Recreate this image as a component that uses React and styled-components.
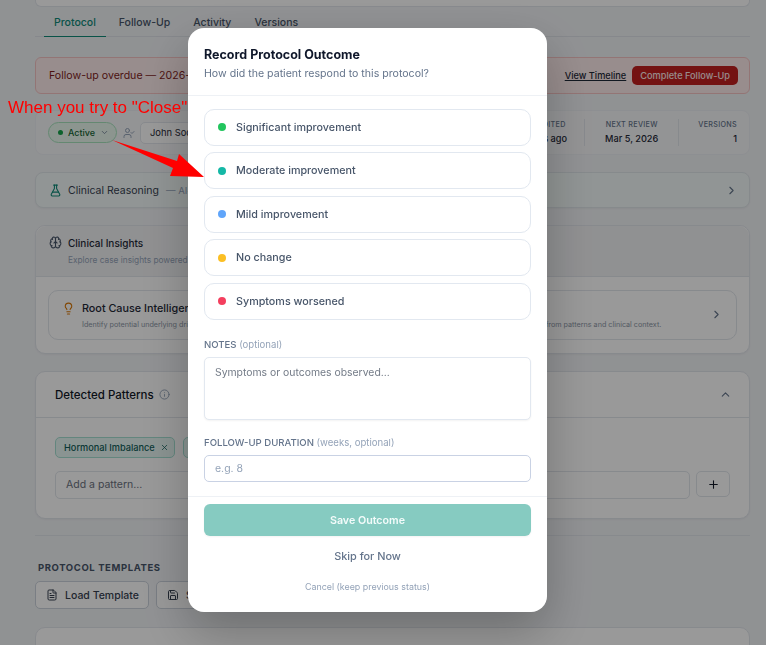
import React from 'react';
import styled, { createGlobalStyle } from 'styled-components';
import {
  Brain, ChevronDown, ChevronRight, ChevronUp, FileText, FlaskConical,
  Info, Lightbulb, Plus, Save, UserCheck, X,
} from 'lucide-react';

const GlobalStyle = createGlobalStyle`
  html, body { margin: 0; padding: 0; }
  body {
    background: #f1f3f6;
    font-family: Inter, "Liberation Sans", sans-serif;
    overflow: hidden;
  }
  * { box-sizing: border-box; }
`;

const Page = styled.div`
  position: relative;
  width: 766px;
  height: 645px;
  overflow: hidden;
  padding: 0 16px 0 35px;
`;

const TopCard = styled.div`
  height: 7px;
  background: #fff;
  border: 1px solid #e2e6ec;
  border-top: 0;
  border-radius: 0 0 6px 6px;
`;

const Tabs = styled.div`
  display: flex;
  height: 30px;
  border-bottom: 1px solid #dfe3e9;
  margin-bottom: 20px;
  padding-left: 9px;
`;

const Tab = styled.div`
  height: 30px;
  padding: 9px 10px 0;
  margin-right: 3px;
  font-size: 10.5px;
  font-weight: 500;
  color: ${(p) => (p.$active ? '#0f8a78' : '#475569')};
  border-bottom: ${(p) => (p.$active ? '1px solid #0f8a78' : '0')};
`;

const Alert = styled.div`
  display: flex;
  align-items: center;
  justify-content: space-between;
  height: 37px;
  padding: 0 11px 0 13px;
  background: #fdecec;
  border: 1px solid #f6c4c4;
  border-radius: 6px;
  margin-bottom: 16px;
  font-size: 10.6px;
  color: #7f1d1d;
`;

const AlertActions = styled.div`
  display: flex;
  align-items: center;
  gap: 6px;
`;

const TimelineLink = styled.span`
  font-size: 9.2px;
  font-weight: 500;
  color: #1f2937;
  text-decoration: underline;
`;

const DangerButton = styled.div`
  height: 19px;
  padding: 0 8px;
  border-radius: 5px;
  background: #c11f1f;
  color: #fde8e8;
  font-size: 9.2px;
  font-weight: 500;
  line-height: 19px;
`;

const MetaCard = styled.div`
  display: flex;
  align-items: center;
  justify-content: space-between;
  height: 45px;
  padding: 0 12px;
  background: #f6f7f9;
  border: 1px solid #eceff3;
  border-radius: 8px;
  margin-bottom: 17px;
`;

const MetaLeft = styled.div`
  display: flex;
  align-items: center;
  gap: 5px;
`;

const StatusPill = styled.div`
  display: flex;
  align-items: center;
  width: 69px;
  height: 21px;
  padding-left: 9px;
  border: 1px solid #a7e3bd;
  border-radius: 11px;
  background: #e9f8ef;
  color: #166534;
  font-size: 9px;
  font-weight: 500;
  margin-right: 1px;
`;

const StatusDot = styled.span`
  width: 5px;
  height: 5px;
  border-radius: 50%;
  background: #16a34a;
  margin-right: 5px;
`;

const Assignee = styled.div`
  height: 22px;
  width: 120px;
  padding-left: 9px;
  background: #fff;
  border: 1px solid #e2e6ec;
  border-radius: 5px;
  font-size: 9.4px;
  line-height: 20px;
  color: #1f2937;
`;

const Stats = styled.div`
  display: flex;
  align-items: center;
`;

const Stat = styled.div`
  text-align: ${(p) => p.$align || 'center'};
  padding: 0 ${(p) => p.$right ?? 20}px 0 ${(p) => p.$left ?? 20}px;
  border-left: ${(p) => (p.$first ? '0' : '1px solid #e2e6ec')};
`;

const StatLabel = styled.div`
  font-size: 7.2px;
  font-weight: 500;
  letter-spacing: 0.3px;
  color: #64748b;
  line-height: 11px;
`;

const StatValue = styled.div`
  font-size: 9.2px;
  font-weight: 500;
  color: #1f2937;
  line-height: 14px;
  margin-top: 2px;
`;

const ReasoningCard = styled.div`
  display: flex;
  align-items: center;
  height: 36px;
  padding: 0 11px 0 13px;
  background: #f2f9f8;
  border: 1px solid #dfe6ea;
  border-radius: 8px;
  margin-bottom: 17px;
  font-size: 10.5px;
  color: #374151;
  box-shadow: 0 1px 2px rgba(0, 0, 0, 0.04);
`;

const MutedInline = styled.span`
  margin-left: 7px;
  color: #94a3b8;
  font-size: 9.5px;
`;

const RowEnd = styled.div`
  margin-left: auto;
  display: flex;
  color: #64748b;
`;

const Panel = styled.div`
  background: #fff;
  border: 1px solid #e2e6ec;
  border-radius: 10px;
  margin-bottom: ${(p) => p.$gap || 17}px;
  box-shadow: 0 1px 2px rgba(0, 0, 0, 0.04);
`;

const InsightsHead = styled.div`
  display: flex;
  gap: 6px;
  height: 51px;
  padding: 10px 13px 0;
  background: #f1f2f4;
  border-bottom: 1px solid #e2e6ec;
  border-radius: 10px 10px 0 0;
`;

const HeadTitle = styled.div`
  font-size: 10px;
  font-weight: 500;
  color: #1f2937;
  line-height: 14px;
`;

const HeadSub = styled.div`
  font-size: 8.3px;
  color: #94a3b8;
  margin-top: 5px;
`;

const InsightsBody = styled.div`
  padding: 13px 12px;
`;

const RootCard = styled.div`
  display: flex;
  gap: 7px;
  height: 50px;
  padding: 11px 13px 0 13px;
  border: 1px solid #e2e6ec;
  border-radius: 10px;
`;

const RootTitle = styled.div`
  font-size: 10.8px;
  font-weight: 500;
  color: #1f2937;
  line-height: 14px;
`;

const RootSub = styled.div`
  font-size: 7.2px;
  color: #8b95a5;
  margin-top: 4px;
  white-space: nowrap;
`;

const PatternsHead = styled.div`
  display: flex;
  align-items: center;
  height: 46px;
  padding: 0 17px 0 19px;
  border-bottom: 1px solid #e2e6ec;
  font-size: 11.5px;
  font-weight: 500;
  color: #111827;
`;

const PatternsBody = styled.div`
  padding: 19px;
`;

const TagRow = styled.div`
  display: flex;
  gap: 8px;
  margin-bottom: 13px;
`;

const Tag = styled.div`
  display: flex;
  align-items: center;
  gap: 5px;
  height: 21px;
  padding: 0 5px 0 8px;
  background: #e7f7f3;
  border: 1px solid #a5e0d3;
  border-radius: 5px;
  font-size: 9.2px;
  font-weight: 500;
  color: #115e59;
`;

const AddRow = styled.div`
  display: flex;
  gap: 6px;
`;

const AddInput = styled.div`
  flex: 1;
  height: 28px;
  padding-left: 10px;
  border: 1px solid #e2e6ec;
  border-radius: 5px;
  font-size: 10.5px;
  line-height: 26px;
  color: #6b7280;
`;

const AddButton = styled.div`
  display: flex;
  align-items: center;
  justify-content: center;
  width: 34px;
  height: 26px;
  border: 1px solid #e2e6ec;
  border-radius: 5px;
  color: #111827;
`;

const Divider = styled.div`
  height: 1px;
  background: #e2e6ec;
  margin-bottom: 26px;
`;

const SectionLabel = styled.div`
  padding-left: 3px;
  font-size: 9.5px;
  font-weight: 700;
  letter-spacing: 0.6px;
  line-height: 12px;
  color: #475569;
  margin-bottom: 7px;
`;

const TemplateRow = styled.div`
  display: flex;
  gap: 7px;
  margin-bottom: 18px;
`;

const TemplateButton = styled.div`
  display: flex;
  align-items: center;
  gap: 7px;
  width: ${(p) => p.$w}px;
  height: 28px;
  padding-left: 10px;
  background: #fff;
  border: 1px solid #cbd2dc;
  border-radius: 5px;
  font-size: 10.5px;
  font-weight: 500;
  color: #374151;
`;

const NextCard = styled.div`
  height: 60px;
  border: 1px solid #e2e6ec;
  border-radius: 10px;
  background: #fff;
`;

const Backdrop = styled.div`
  position: absolute;
  inset: 0;
  padding: 28px 0 0 188px;
  background: rgba(0, 0, 0, 0.4);
  backdrop-filter: blur(0.6px);
`;

const Modal = styled.div`
  display: flex;
  flex-direction: column;
  width: 359px;
  height: 584px;
  background: #fff;
  border-radius: 16px;
  box-shadow: 0 20px 50px rgba(0, 0, 0, 0.25);
`;

const ModalHead = styled.div`
  height: 68px;
  padding: 19px 16px 0;
  border-bottom: 1px solid #eef1f5;
`;

const ModalTitle = styled.div`
  font-size: 12.5px;
  font-weight: 700;
  line-height: 15px;
  color: #0f172a;
`;

const ModalSub = styled.div`
  margin-top: 5px;
  font-size: 10.6px;
  line-height: 13px;
  color: #64748b;
`;

const ModalBody = styled.div`
  flex: 1;
  padding: 13px 16px 0;
`;

const OptionList = styled.div`
  display: flex;
  flex-direction: column;
  gap: 6.7px;
  margin-bottom: 18.8px;
`;

const Option = styled.div`
  display: flex;
  align-items: center;
  gap: 10px;
  height: 36.8px;
  padding-left: 13px;
  border: 1px solid #e2e8f0;
  border-radius: 10px;
  font-size: 10.75px;
  font-weight: 500;
  color: #475569;
`;

const Dot = styled.span`
  width: 8px;
  height: 8px;
  border-radius: 50%;
  background: ${(p) => p.$color};
`;

const FieldLabel = styled.div`
  font-size: 9.6px;
  font-weight: 500;
  line-height: 12px;
  color: #64748b;
  margin-bottom: 6px;
`;

const Optional = styled.span`
  font-weight: 400;
  color: #94a3b8;
`;

const NotesBox = styled.textarea`
  display: block;
  width: 100%;
  height: 63.5px;
  padding: 7px 10px;
  margin-bottom: 16.5px;
  border: 1px solid #e2e8f0;
  border-radius: 5px;
  outline: 0;
  resize: none;
  font-family: inherit;
  font-size: 10.4px;
  line-height: 15px;
  box-shadow: 0 1px 2px rgba(0, 0, 0, 0.05);
  &::placeholder { color: #737b87; }
`;

const WeeksInput = styled.input`
  display: block;
  width: 100%;
  height: 27.5px;
  padding: 0 10px;
  border: 1px solid #c9d2e4;
  border-radius: 5px;
  outline: 0;
  font-family: inherit;
  font-size: 10.5px;
  &::placeholder { color: #94a3b8; }
`;

const ModalFoot = styled.div`
  height: 116px;
  padding: 7px 16px 0;
  border-top: 1px solid #eef1f5;
  text-align: center;
`;

const SaveButton = styled.div`
  height: 32px;
  border-radius: 6px;
  background: #86cbc1;
  color: #f3fbfa;
  font-size: 10.7px;
  font-weight: 600;
  line-height: 33px;
  box-shadow: 0 1px 2px rgba(0, 0, 0, 0.05);
`;

const SkipLink = styled.div`
  margin-top: 13px;
  font-size: 10.9px;
  font-weight: 500;
  line-height: 14px;
  color: #64748b;
`;

const CancelLink = styled.div`
  margin-top: 18px;
  font-size: 8.9px;
  line-height: 12px;
  color: #94a3b8;
`;

const Annotation = styled.div`
  position: absolute;
  left: 8px;
  top: 98px;
  font-family: "Liberation Sans", Arial, sans-serif;
  font-size: 17px;
  line-height: 20px;
  color: #ff0000;
  white-space: nowrap;
`;

const ArrowMark = styled.svg`
  position: absolute;
  left: 105px;
  top: 135px;
`;

const outcomes = [
  ['#22c55e', 'Significant improvement'],
  ['#14b8a6', 'Moderate improvement'],
  ['#60a5fa', 'Mild improvement'],
  ['#fbbf24', 'No change'],
  ['#f43f5e', 'Symptoms worsened'],
];

export default function App() {
  return (
    <Page>
      <GlobalStyle />
      <TopCard />
      <Tabs>
        <Tab $active>Protocol</Tab>
        <Tab>Follow-Up</Tab>
        <Tab>Activity</Tab>
        <Tab>Versions</Tab>
      </Tabs>

      <Alert>
        <span>Follow-up overdue — 2026-02-05</span>
        <AlertActions>
          <TimelineLink>View Timeline</TimelineLink>
          <DangerButton>Complete Follow-Up</DangerButton>
        </AlertActions>
      </Alert>

      <MetaCard>
        <MetaLeft>
          <StatusPill>
            <StatusDot />
            Active
            <ChevronDown size={9} color="#64748b" style={{ marginLeft: 5 }} />
          </StatusPill>
          <UserCheck size={12} color="#94a3b8" />
          <Assignee>John Socrates</Assignee>
        </MetaLeft>
        <Stats>
          <Stat $first $right={17}>
            <StatLabel>LAST EDITED</StatLabel>
            <StatValue>2 hours ago</StatValue>
          </Stat>
          <Stat>
            <StatLabel>NEXT REVIEW</StatLabel>
            <StatValue>Mar 5, 2026</StatValue>
          </Stat>
          <Stat $align="right" $right={0} $left={19}>
            <StatLabel>VERSIONS</StatLabel>
            <StatValue>1</StatValue>
          </Stat>
        </Stats>
      </MetaCard>

      <ReasoningCard>
        <FlaskConical size={13} color="#0f8a78" style={{ marginRight: 6 }} />
        Clinical Reasoning
        <MutedInline>— AI-assisted summary</MutedInline>
        <RowEnd><ChevronRight size={13} /></RowEnd>
      </ReasoningCard>

      <Panel>
        <InsightsHead>
          <Brain size={13} color="#475569" />
          <div>
            <HeadTitle>Clinical Insights</HeadTitle>
            <HeadSub>Explore case insights powered by AI</HeadSub>
          </div>
        </InsightsHead>
        <InsightsBody>
          <RootCard>
            <Lightbulb size={13} color="#d97706" />
            <div>
              <RootTitle>Root Cause Intelligence</RootTitle>
              <RootSub>
                Identify potential underlying drivers of the presenting symptoms and connect them with supporting evidence and further findings drawn from patterns and clinical context.
              </RootSub>
            </div>
            <RowEnd style={{ marginTop: 6 }}><ChevronRight size={13} /></RowEnd>
          </RootCard>
        </InsightsBody>
      </Panel>

      <Panel $gap={16}>
        <PatternsHead>
          Detected Patterns
          <Info size={11} color="#94a3b8" style={{ marginLeft: 5 }} />
          <RowEnd><ChevronUp size={13} /></RowEnd>
        </PatternsHead>
        <PatternsBody>
          <TagRow>
            <Tag>Hormonal Imbalance <X size={9} /></Tag>
            <Tag>Thyroid <X size={9} /></Tag>
          </TagRow>
          <AddRow>
            <AddInput>Add a pattern...</AddInput>
            <AddButton><Plus size={13} /></AddButton>
          </AddRow>
        </PatternsBody>
      </Panel>

      <Divider />
      <SectionLabel>PROTOCOL TEMPLATES</SectionLabel>
      <TemplateRow>
        <TemplateButton $w={114}><FileText size={12} />Load Template</TemplateButton>
        <TemplateButton $w={120}><Save size={12} />Save as Template</TemplateButton>
      </TemplateRow>
      <NextCard />

      <Backdrop>
        <Modal>
          <ModalHead>
            <ModalTitle>Record Protocol Outcome</ModalTitle>
            <ModalSub>How did the patient respond to this protocol?</ModalSub>
          </ModalHead>
          <ModalBody>
            <OptionList>
              {outcomes.map(([color, label]) => (
                <Option key={label}>
                  <Dot $color={color} />
                  {label}
                </Option>
              ))}
            </OptionList>
            <FieldLabel>NOTES <Optional>(optional)</Optional></FieldLabel>
            <NotesBox placeholder="Symptoms or outcomes observed..." />
            <FieldLabel>FOLLOW-UP DURATION <Optional>(weeks, optional)</Optional></FieldLabel>
            <WeeksInput placeholder="e.g. 8" />
          </ModalBody>
          <ModalFoot>
            <SaveButton>Save Outcome</SaveButton>
            <SkipLink>Skip for Now</SkipLink>
            <CancelLink>Cancel (keep previous status)</CancelLink>
          </ModalFoot>
        </Modal>
      </Backdrop>

      <Annotation>When you try to "Close"</Annotation>
      <ArrowMark width="102" height="46" viewBox="0 0 102 46">
        <polygon points="7,5 72,26 74,19 99,42 65,41 68,33" fill="#ff0000" />
      </ArrowMark>
    </Page>
  );
}
